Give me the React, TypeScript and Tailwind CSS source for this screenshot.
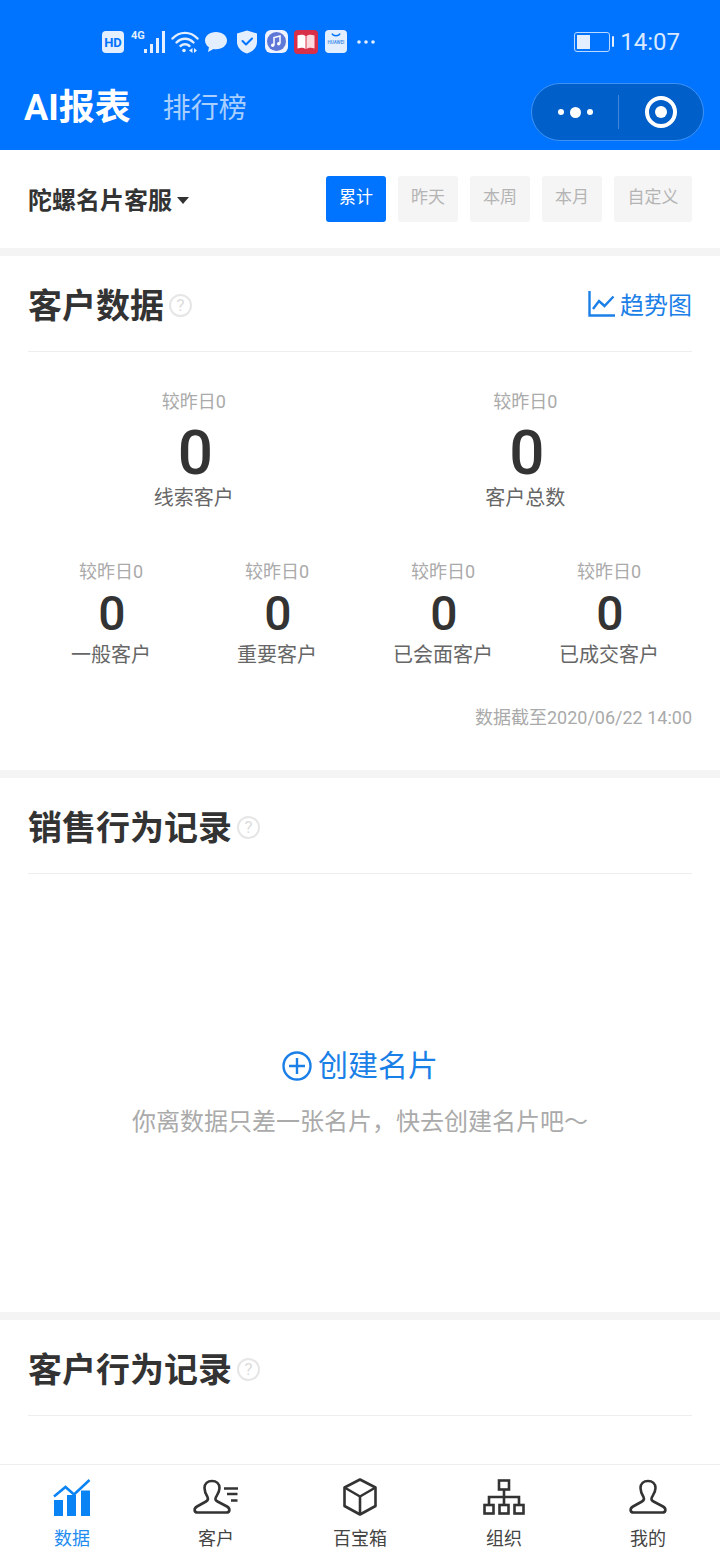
import React from "react";

const FONT = "[font-family:'Roboto','Noto_Sans_CJK_SC',sans-serif]";

function Help() {
  return (
    <span className="-mt-[1px] ml-[5px] flex h-[23px] w-[23px] items-center justify-center rounded-full border-2 border-[#e6e6e6] text-[17px] leading-none text-[#dcdcdc]">?</span>
  );
}

function SectionHead({ title, right }: { title: string; right?: React.ReactNode }) {
  return (
    <div className="flex h-[96px] items-center justify-between border-b border-[#eeeeee] pt-[4px]">
      <div className="flex items-center">
        <span className="text-[34px] font-bold leading-none text-[#333333]">{title}</span>
        <Help />
      </div>
      {right}
    </div>
  );
}

function Stat({ label, large }: { label: string; large?: boolean }) {
  return (
    <div className="flex flex-col items-center">
      <span className="text-[18px] leading-[24px] text-[#aaaaaa]">较昨日0</span>
      <span
        className={`font-medium text-[#333333] ${
          large
            ? "ml-[3px] mt-[9px] mb-[2px] h-[60px] text-[62px] leading-[60px]"
            : "ml-[2px] mt-[5px] mb-[3px] h-[50px] text-[48px] leading-[50px]"
        }`}
      >
        0
      </span>
      <span className="text-[20px] leading-[26px] text-[#666666]">{label}</span>
    </div>
  );
}

function StatusIcons() {
  return (
    <div className="flex items-center">
      <svg width="22" height="22" viewBox="0 0 22 22" className="mr-[7px]">
        <rect x="0" y="0" width="22" height="22" rx="4" fill="#e3effe" />
        <text x="11" y="16" textAnchor="middle" fontSize="13" fontWeight="700" fill="#0073ff" fontFamily="Roboto">HD</text>
      </svg>
      <svg width="38" height="26" viewBox="0 0 38 26" className="mr-[2px]">
        <text x="0" y="10" fontSize="11" fontWeight="700" fill="#e3effe" fontFamily="Roboto">4G</text>
        <rect x="13" y="20" width="3" height="4" fill="#e3effe" />
        <rect x="19" y="15" width="3" height="9" fill="#e3effe" />
        <rect x="25" y="9" width="3" height="15" fill="#e3effe" />
        <rect x="31" y="2" width="3" height="22" fill="#e3effe" />
      </svg>
      <svg width="28" height="24" viewBox="0 0 28 24" fill="none" stroke="#e3effe" strokeWidth="2.4" strokeLinecap="round" className="mr-[5px]">
        <path d="M1.500 8.500C8.500 1 19.500 1 26.500 8.500" />
        <path d="M5.500 12.500C10.500 7.500 17.500 7.500 22.500 12.500" />
        <path d="M9.500 16C12 13.700 16 13.700 18.500 16" />
        <circle cx="13" cy="20.500" r="1.800" fill="#e3effe" stroke="none" />
        <path d="M18 20.500l3.500-2.500v5Z" fill="#e3effe" stroke="none" />
        <path d="M23 18v5l3-2.500Z" fill="#e3effe" stroke="none" />
      </svg>
      <svg width="24" height="22" viewBox="0 0 24 22" className="mr-[8px]">
        <path d="M12 1C5.500 1 1 4.800 1 9.500c0 2.800 1.600 5.200 4 6.800L4 21l5.500-3c.8.100 1.600.2 2.500.2 6.500 0 11-3.900 11-8.700S18.500 1 12 1Z" fill="#e3effe" />
      </svg>
      <svg width="22" height="24" viewBox="0 0 22 24" className="mr-[7px]">
        <path d="M11 0.500 L21 3.500 V12c0 5.500-4 9.500-10 11.500C5 21.500 1 17.500 1 12V3.500Z" fill="#e3effe" />
        <path d="M6.500 11l3.500 3.500 6-6" fill="none" stroke="#0073ff" strokeWidth="2" strokeLinecap="round" strokeLinejoin="round" />
      </svg>
      <svg width="23" height="23" viewBox="0 0 23 23" className="mr-[6px]">
        <rect width="23" height="23" rx="6" fill="#f0f3ff" />
        <circle cx="11.500" cy="11.500" r="9.500" fill="#5f78d8" />
        <path d="M9 15V7.500l6-1.500v7.500" fill="none" stroke="#fff" strokeWidth="1.500" />
        <circle cx="7.700" cy="15.300" r="1.700" fill="#fff" />
        <circle cx="13.700" cy="13.800" r="1.700" fill="#fff" />
      </svg>
      <svg width="24" height="24" viewBox="0 0 24 24" className="mr-[7px]">
        <rect width="24" height="24" rx="4" fill="#d9304a" />
        <path d="M3.500 5.500c3-1 6-1 8 .5v13c-2-1.500-5-1.500-8-.5Z" fill="#fff" />
        <path d="M20.500 5.500c-3-1-6-1-8 .5v13c2-1.500 5-1.500 8-.5Z" fill="#fbd9dd" />
      </svg>
      <svg width="22" height="23" viewBox="0 0 22 23" className="mr-[10px]">
        <rect width="22" height="23" rx="4" fill="#e3effe" />
        <path d="M7 3.500c1 3 7 3 8 0" fill="none" stroke="#0073ff" strokeWidth="1.300" />
        <text x="11" y="14" textAnchor="middle" fontSize="4.500" fontWeight="700" fill="#4f94ea" fontFamily="Roboto">HUAWEI</text>
      </svg>
      <svg width="18" height="4" viewBox="0 0 18 4">
        <circle cx="2" cy="2" r="1.800" fill="#e3effe" />
        <circle cx="9" cy="2" r="1.800" fill="#e3effe" />
        <circle cx="16" cy="2" r="1.800" fill="#e3effe" />
      </svg>
    </div>
  );
}

function BarsIcon() {
  return (
    <svg width="38" height="38" viewBox="0 0 38 38">
      <path d="M1 18.500 L12.500 9 L21 16.500 L36.500 2" fill="none" stroke="#0a84f5" strokeWidth="2.500" />
      <rect x="1" y="22" width="9" height="16" fill="#0a84f5" />
      <rect x="14" y="17" width="9" height="21" fill="#0a84f5" />
      <rect x="28" y="12.500" width="9" height="25.500" fill="#0a84f5" />
    </svg>
  );
}

function PersonPath() {
  return (
    <path d="M19 2c-4.500 0-7.500 3-7.500 7 0 4 1.500 6.500 3 9 1 2 .5 3.500-1.500 4.500L4 27.500c-3.500 2-3 6 .5 6h29c3.500 0 4-4 .5-6l-9.500-5c-2-1-2.500-2.500-1.500-4.500 1.500-2.500 3.500-5 3.500-9 0-4-3-7-7.500-7Z" />
  );
}

function CustomerIcon() {
  return (
    <svg width="46" height="36" viewBox="0 0 46 36" fill="none" stroke="#333" strokeWidth="2.600">
      <PersonPath />
      <path d="M31 9.500h14M34 15h10.500M38 21.500h6.500" />
    </svg>
  );
}

function BoxIcon() {
  return (
    <svg width="34" height="38" viewBox="0 0 34 38" fill="none" stroke="#333" strokeWidth="2.600" strokeLinejoin="round">
      <path d="M17 1.500 32.500 9.500V28L17 36.500 1.500 28V9.500Z" />
      <path d="M1.500 9.500 17 18.500 32.500 9.500M17 18.500V36.500" />
    </svg>
  );
}

function OrgIcon() {
  return (
    <svg width="42" height="36" viewBox="0 0 42 36" fill="none" stroke="#333" strokeWidth="2.600">
      <rect x="16" y="1.500" width="10" height="9" />
      <rect x="1.500" y="26" width="9" height="8.500" />
      <rect x="16.500" y="26" width="9" height="8.500" />
      <rect x="31.500" y="26" width="9" height="8.500" />
      <path d="M21 10.500V26M6 26v-8h30v8" />
    </svg>
  );
}

function MeIcon() {
  return (
    <svg width="38" height="36" viewBox="0 0 38 36" fill="none" stroke="#333" strokeWidth="2.600">
      <PersonPath />
    </svg>
  );
}

function Tab({ icon, label, active }: { icon: React.ReactNode; label: string; active?: boolean }) {
  return (
    <div className="flex w-[144px] flex-col items-center">
      <div className="flex h-[40px] items-center justify-center">{icon}</div>
      <span className={`mt-[10px] text-[18px] leading-[24px] ${active ? "text-[#1e8cf0]" : "text-[#444444]"}`}>{label}</span>
    </div>
  );
}

export default function App() {
  return (
    <div className={`flex h-[1560px] w-[720px] flex-col overflow-hidden bg-white ${FONT}`}>
      {/* Header */}
      <header className="h-[150px] shrink-0 bg-[#0073ff]">
        <div className="flex h-[83px] items-center pl-[102px] pr-[40px]">
          <StatusIcons />
          <div className="ml-auto flex items-center">
            <div className="flex h-[20px] w-[36px] items-center rounded-[3px] border border-[#bcd9ff] p-[2px]">
              <div className="h-[14px] w-[13px] bg-[#e3effe]" />
            </div>
            <div className="ml-[2px] h-[11px] w-[2px] rounded-sm bg-[#e3effe]" />
            <span className="ml-[6px] mt-[1px] text-[24px] leading-none text-[#d9e9ff]">14:07</span>
          </div>
        </div>
        <div className="flex h-[57px] items-start pl-[24px] pr-[16px]">
          <span className="mt-[2px] text-[36px] font-bold leading-[46px] text-white">AI报表</span>
          <span className="ml-[32px] mt-[5px] text-[28px] leading-[42px] text-[#a8cfff]">排行榜</span>
          <div className="ml-auto flex h-[58px] w-[173px] items-center rounded-full border border-[#3f92f5] bg-[#005fc9]">
            <div className="flex w-[86px] items-center justify-center gap-[6px]">
              <span className="h-[6px] w-[6px] rounded-full bg-white" />
              <span className="h-[11px] w-[11px] rounded-full bg-white" />
              <span className="h-[6px] w-[6px] rounded-full bg-white" />
            </div>
            <div className="h-[34px] w-px bg-[#3f86dd]" />
            <div className="flex flex-1 items-center justify-center">
              <span className="flex h-[32px] w-[32px] items-center justify-center rounded-full border-[4px] border-white">
                <span className="h-[12px] w-[12px] rounded-full bg-white" />
              </span>
            </div>
          </div>
        </div>
      </header>

      {/* Filter */}
      <section className="flex h-[98px] shrink-0 items-center justify-between px-[28px]">
        <div className="mt-[3px] flex items-center">
          <span className="text-[24px] font-bold leading-none text-[#333333]">陀螺名片客服</span>
          <span className="ml-[5px] h-0 w-0 border-x-[6px] border-t-[7px] border-x-transparent border-t-[#333333]" />
        </div>
        <div className="flex gap-[12px]">
          <span className="flex h-[46px] w-[60px] items-start justify-center rounded-[3px] bg-[#0073ff] pt-[9px] text-[17px] leading-[24px] text-white">累计</span>
          {["昨天", "本周", "本月"].map((t) => (
            <span key={t} className="flex h-[46px] w-[60px] items-start justify-center rounded-[3px] bg-[#f5f5f5] pt-[9px] text-[17px] leading-[24px] text-[#b4b4b4]">{t}</span>
          ))}
          <span className="flex h-[46px] w-[78px] items-start justify-center rounded-[3px] bg-[#f5f5f5] pt-[9px] text-[17px] leading-[24px] text-[#b4b4b4]">自定义</span>
        </div>
      </section>
      <div className="h-[8px] shrink-0 bg-[#f4f4f4]" />

      {/* Customer data */}
      <section className="h-[514px] shrink-0 px-[28px]">
        <SectionHead
          title="客户数据"
          right={
            <div className="flex items-center text-[#1b7fe8]">
              <svg width="27" height="26" viewBox="0 0 27 26" fill="none" stroke="#1b7fe8" strokeWidth="2.400" className="mr-[5px] -mt-[4px]">
                <path d="M1.500 0v24.500H27" />
                <path d="M5 18l6-8 5.500 5L25.500 5.500" />
              </svg>
              <span className="mt-[1px] text-[24px] leading-none">趋势图</span>
            </div>
          }
        />
        <div className="mt-[38px] grid grid-cols-2 pr-[1px]">
          <Stat label="线索客户" large />
          <Stat label="客户总数" large />
        </div>
        <div className="mt-[49px] grid grid-cols-4">
          <Stat label="一般客户" />
          <Stat label="重要客户" />
          <Stat label="已会面客户" />
          <Stat label="已成交客户" />
        </div>
        <div className="mt-[38px] text-right text-[18px] leading-[24px] text-[#aaaaaa]">数据截至2020/06/22 14:00</div>
      </section>
      <div className="h-[8px] shrink-0 bg-[#f4f4f4]" />

      {/* Sales */}
      <section className="h-[534px] shrink-0 px-[28px]">
        <SectionHead title="销售行为记录" />
        <div className="mt-[172px] flex flex-col items-center">
          <div className="flex items-center text-[#1b7fe8]">
            <svg width="30" height="30" viewBox="0 0 30 30" fill="none" stroke="#1b7fe8" strokeWidth="2.400" className="mr-[6px]">
              <circle cx="15" cy="15" r="13.500" />
              <path d="M7 15h16M15 7v16" />
            </svg>
            <span className="text-[30px] leading-[40px]">创建名片</span>
          </div>
          <span className="mt-[19px] text-[24px] leading-[34px] text-[#aaaaaa]">你离数据只差一张名片，快去创建名片吧～</span>
        </div>
      </section>
      <div className="h-[8px] shrink-0 bg-[#f4f4f4]" />

      {/* Customer behaviour */}
      <section className="h-[144px] shrink-0 px-[28px]">
        <SectionHead title="客户行为记录" />
      </section>

      {/* Tab bar */}
      <nav className="flex h-[96px] shrink-0 border-t border-[#eeeeee] pt-[12px]">
        <Tab icon={<BarsIcon />} label="数据" active />
        <Tab icon={<CustomerIcon />} label="客户" />
        <Tab icon={<BoxIcon />} label="百宝箱" />
        <Tab icon={<OrgIcon />} label="组织" />
        <Tab icon={<MeIcon />} label="我的" />
      </nav>
    </div>
  );
}
